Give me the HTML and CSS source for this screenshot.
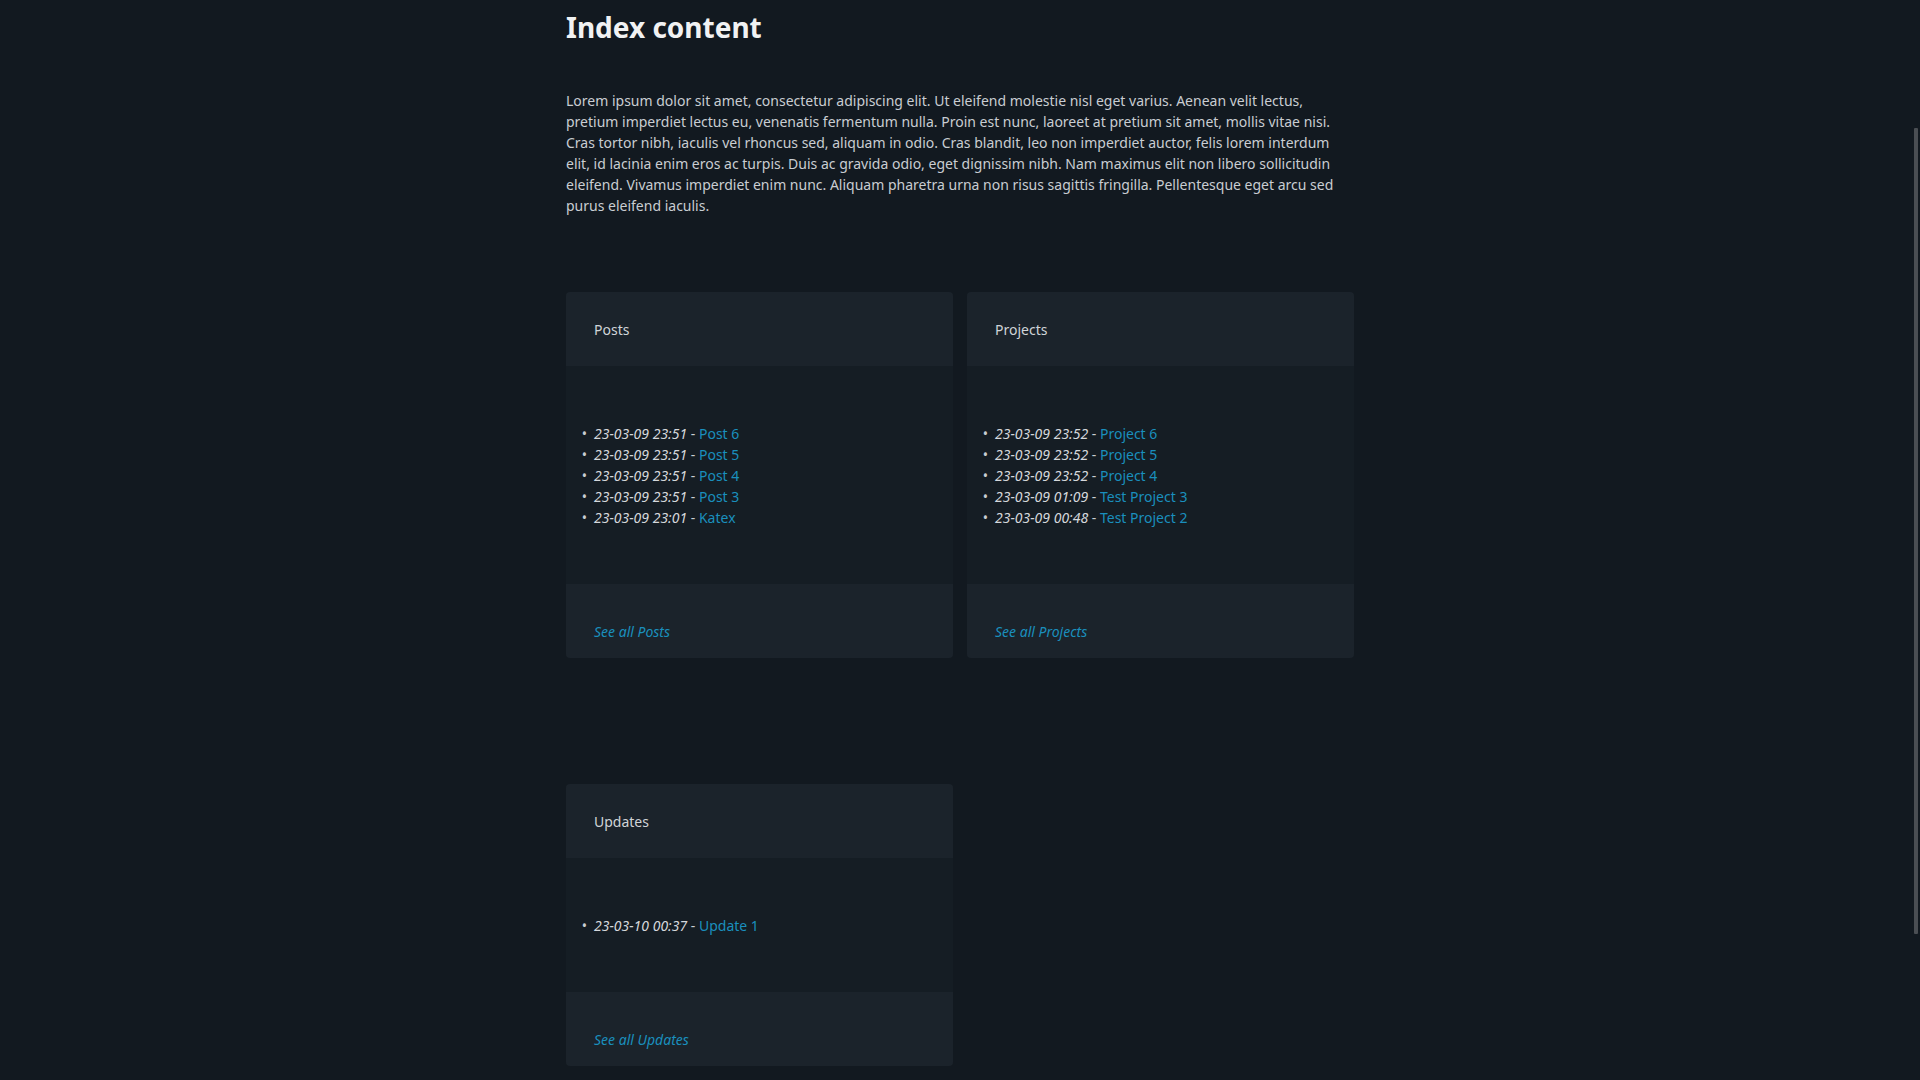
FILE: index.html
```html
<!DOCTYPE html>
<html lang="en">
<head>
<meta charset="utf-8">
<title>Index content</title>
<link rel="stylesheet" href="styles.css">
</head>
<body>
<main class="page">
  <h1 class="title">Index content</h1>
  <p class="intro">Lorem ipsum dolor sit amet, consectetur adipiscing elit. Ut eleifend molestie nisl eget varius. Aenean velit lectus, pretium imperdiet lectus eu, venenatis fermentum nulla. Proin est nunc, laoreet at pretium sit amet, mollis vitae nisi. Cras tortor nibh, iaculis vel rhoncus sed, aliquam in odio. Cras blandit, leo non imperdiet auctor, felis lorem interdum elit, id lacinia enim eros ac turpis. Duis ac gravida odio, eget dignissim nibh. Nam maximus elit non libero sollicitudin eleifend. Vivamus imperdiet enim nunc. Aliquam pharetra urna non risus sagittis fringilla. Pellentesque eget arcu sed purus eleifend iaculis.</p>

  <div class="cards">
    <section class="card">
      <header class="card-head">Posts</header>
      <div class="card-body">
        <ul class="list">
          <li><em>23-03-09 23:51</em> - <a href="#">Post 6</a></li>
          <li><em>23-03-09 23:51</em> - <a href="#">Post 5</a></li>
          <li><em>23-03-09 23:51</em> - <a href="#">Post 4</a></li>
          <li><em>23-03-09 23:51</em> - <a href="#">Post 3</a></li>
          <li><em>23-03-09 23:01</em> - <a href="#">Katex</a></li>
        </ul>
      </div>
      <footer class="card-foot"><a href="#"><em>See all Posts</em></a></footer>
    </section>

    <section class="card">
      <header class="card-head">Projects</header>
      <div class="card-body">
        <ul class="list">
          <li><em>23-03-09 23:52</em> - <a href="#">Project 6</a></li>
          <li><em>23-03-09 23:52</em> - <a href="#">Project 5</a></li>
          <li><em>23-03-09 23:52</em> - <a href="#">Project 4</a></li>
          <li><em>23-03-09 01:09</em> - <a href="#">Test Project 3</a></li>
          <li><em>23-03-09 00:48</em> - <a href="#">Test Project 2</a></li>
        </ul>
      </div>
      <footer class="card-foot"><a href="#"><em>See all Projects</em></a></footer>
    </section>

    <section class="card">
      <header class="card-head">Updates</header>
      <div class="card-body">
        <ul class="list">
          <li><em>23-03-10 00:37</em> - <a href="#">Update 1</a></li>
        </ul>
      </div>
      <footer class="card-foot"><a href="#"><em>See all Updates</em></a></footer>
    </section>
  </div>
</main>
<div class="scroll-thumb"></div>
</body>
</html>
```

FILE: styles.css
```css
html, body {
  margin: 0;
  padding: 0;
  background: #121920;
}

body {
  font-family: "Noto Sans", "DejaVu Sans", sans-serif;
  font-size: 14px;
  line-height: 21px;
  color: #c9cdd2;
  height: 1080px;
  overflow: hidden;
}

.page {
  width: 788px;
  margin: 0 auto;
  padding-top: 9px;
}

.title {
  margin: 0;
  font-size: 28px;
  line-height: 36px;
  font-weight: 700;
  color: #f1f2f3;
}

.intro {
  margin: 45px 0 0;
}

.cards {
  margin-top: 76px;
  display: grid;
  grid-template-columns: 1fr 1fr;
  column-gap: 14px;
  row-gap: 126px;
}

.card {
  border-radius: 4px;
  overflow: hidden;
  background: #151d24;
}

.card-head {
  height: 74px;
  box-sizing: border-box;
  padding: 0 28px;
  display: flex;
  align-items: center;
  background: #1b232b;
  color: #d0d4d8;
}

.card-body {
  padding: 57px 28px 56px;
}

.list {
  margin: 0;
  padding: 0;
  list-style: disc outside;
}

.list li {
  margin: 0;
}

.list li::marker {
  content: "\2022\2002";
  color: #c9cdd2;
}

.list em {
  font-style: italic;
  color: #d5d8dc;
}

a {
  color: #1a8fbd;
  text-decoration: none;
}

.card-foot {
  height: 74px;
  box-sizing: border-box;
  padding: 37px 28px 0;
  background: #1b232b;
}

.scroll-thumb {
  position: fixed;
  right: 2px;
  top: 128px;
  width: 4px;
  height: 806px;
  background: #4a4e53;
  border-radius: 1px;
}
```
